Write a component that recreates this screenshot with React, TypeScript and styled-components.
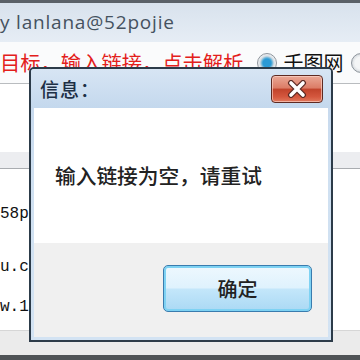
import React from "react";
import styled, { createGlobalStyle } from "styled-components";

const Global = createGlobalStyle`
  html, body { margin: 0; padding: 0; background: #ffffff; }
  #root { width: 360px; height: 360px; }
`;

const cjk = `"Noto Sans CJK SC", "Noto Sans", sans-serif`;

const Page = styled.div`
  position: relative;
  width: 360px;
  height: 360px;
  overflow: hidden;
  display: flex;
  flex-direction: column;
  background: #ffffff;
`;

const TopEdge = styled.div`
  height: 3px;
  background: #5a6168;
  flex: none;
`;

const TitleBar = styled.div`
  height: 39px;
  flex: none;
  box-sizing: border-box;
  padding-top: 10px;
  background: linear-gradient(#d8e2ed, #e6edf5);
  overflow: hidden;
  white-space: nowrap;
`;

const TitleText = styled.div`
  font-family: "Open Sans", "Noto Sans", sans-serif;
  font-size: 19px;
  line-height: 19px;
  letter-spacing: 0.8px;
  color: #45525f;
`;

const Toolbar = styled.div`
  height: 41px;
  flex: none;
  display: flex;
  align-items: center;
  background: #fafbfc;
  white-space: nowrap;
  overflow: hidden;
`;

const RedText = styled.span`
  font-family: ${cjk};
  font-size: 20.3px;
  line-height: 1;
  color: #e3201b;
`;

const Radio = styled.span<{ $checked?: boolean }>`
  flex: none;
  width: 18px;
  height: 18px;
  border-radius: 50%;
  border: 1px solid #8e959c;
  background: ${(p) =>
    p.$checked
      ? "radial-gradient(circle, #2b9ad6 0 4px, #5aaed8 5px, #d6dde3 7px, #eef1f4 9px)"
      : "radial-gradient(circle, #f4f5f6 0 6px, #d9dde1 9px)"};
  margin-left: ${(p) => (p.$checked ? "14px" : "8px")};
`;

const Label = styled.span`
  font-family: ${cjk};
  font-size: 20px;
  line-height: 1;
  color: #111;
  margin-left: 6px;
`;

const Divider = styled.div`
  height: 1px;
  flex: none;
  background: #b9bcbf;
`;

const ListArea = styled.div`
  flex: 1;
  display: flex;
  flex-direction: column;
  background: #ffffff;
`;

const HeaderBand = styled.div`
  margin-top: 68px;
  height: 16px;
  flex: none;
  background: #ecedf0;
  border-bottom: 1px solid #a9acb0;
`;

const Row = styled.div<{ $top: number }>`
  margin-top: ${(p) => p.$top}px;
  font-family: "Liberation Mono", "DejaVu Sans Mono", monospace;
  font-size: 16px;
  line-height: 16px;
  color: #111;
  white-space: nowrap;
`;

const StatusBar = styled.div`
  height: 25px;
  flex: none;
  background: #ebebeb;
  border-top: 1px solid #d6d6d6;
  box-sizing: border-box;
`;

const BottomEdge = styled.div`
  height: 5px;
  flex: none;
  background: #4f5356;
`;

/* Dialog (overlay) */
const Dialog = styled.div`
  position: absolute;
  left: 29px;
  top: 67px;
  width: 304px;
  height: 275px;
  box-sizing: border-box;
  border: 2px solid #2c3b49;
  border-radius: 5px 5px 0 0;
  background: linear-gradient(#c3d6ec, #cfe0f1 40%, #d3e3f3);
  display: flex;
  flex-direction: column;
`;

const DialogHeader = styled.div`
  height: 39px;
  flex: none;
  display: flex;
  align-items: center;
  justify-content: space-between;
  padding: 0 8px 0 9px;
  background: linear-gradient(#d7e5f4, #c4d8ed);
  border-radius: 3px 3px 0 0;
`;

const DialogTitle = styled.span`
  font-family: ${cjk};
  font-size: 19px;
  font-weight: 500;
  line-height: 1;
  letter-spacing: 1px;
  color: #1d2f45;
`;

const CloseButton = styled.div`
  width: 52px;
  height: 28px;
  box-sizing: border-box;
  border: 1px solid #5e2a22;
  border-radius: 4px;
  background: linear-gradient(#eaa896 0%, #dc7d67 45%, #c2442c 52%, #d4573e 80%, #e27a5e 100%);
  box-shadow: inset 0 0 0 1px rgba(255, 220, 210, 0.6);
  display: flex;
  align-items: center;
  justify-content: center;
`;

const Body = styled.div`
  height: 135px;
  flex: none;
  margin: 0 3px;
  background: #ffffff;
  box-sizing: border-box;
  padding: 57px 0 0 21px;
`;

const Message = styled.div`
  font-family: ${cjk};
  font-size: 20.7px;
  font-weight: 500;
  line-height: 1;
  color: #222;
`;

const Footer = styled.div`
  flex: 1;
  margin: 0 3px 3px;
  background: #f0f0f0;
  display: flex;
  justify-content: flex-end;
  align-items: flex-start;
  padding: 22px 16px 0 0;
`;

const OkButton = styled.div`
  width: 149px;
  height: 47px;
  box-sizing: border-box;
  border: 1px solid #3a7cae;
  border-radius: 5px;
  background: linear-gradient(#eef8fe 0%, #dff2fd 48%, #c3e6fa 52%, #aad9f4 100%);
  box-shadow: inset 0 0 0 2px #7ed2f3;
  display: flex;
  align-items: center;
  justify-content: center;
  font-family: ${cjk};
  font-size: 20px;
  font-weight: 500;
  line-height: 1;
  color: #222;
`;

const CloseIcon = () => (
  <svg width="24" height="18" viewBox="0 0 24 18">
    <path d="M6 3 L18 15 M18 3 L6 15" stroke="#5a2a24" strokeWidth="6" strokeLinecap="round" />
    <path d="M6 3 L18 15 M18 3 L6 15" stroke="#ffffff" strokeWidth="3.6" strokeLinecap="round" />
  </svg>
);

export default function App() {
  return (
    <>
      <Global />
      <Page>
        <TopEdge />
        <TitleBar>
          <TitleText>y lanlana@52pojie</TitleText>
        </TitleBar>
        <Toolbar>
          <RedText>目标，输入链接，点击解析</RedText>
          <Radio $checked />
          <Label>千图网</Label>
          <Radio />
        </Toolbar>
        <Divider />
        <ListArea>
          <HeaderBand />
          <Row $top={37}>58pic.com</Row>
          <Row $top={37}>u.com</Row>
          <Row $top={24}>w.16pic.com</Row>
        </ListArea>
        <StatusBar />
        <BottomEdge />
        <Dialog>
          <DialogHeader>
            <DialogTitle>信息：</DialogTitle>
            <CloseButton>
              <CloseIcon />
            </CloseButton>
          </DialogHeader>
          <Body>
            <Message>输入链接为空，请重试</Message>
          </Body>
          <Footer>
            <OkButton>确定</OkButton>
          </Footer>
        </Dialog>
      </Page>
    </>
  );
}
